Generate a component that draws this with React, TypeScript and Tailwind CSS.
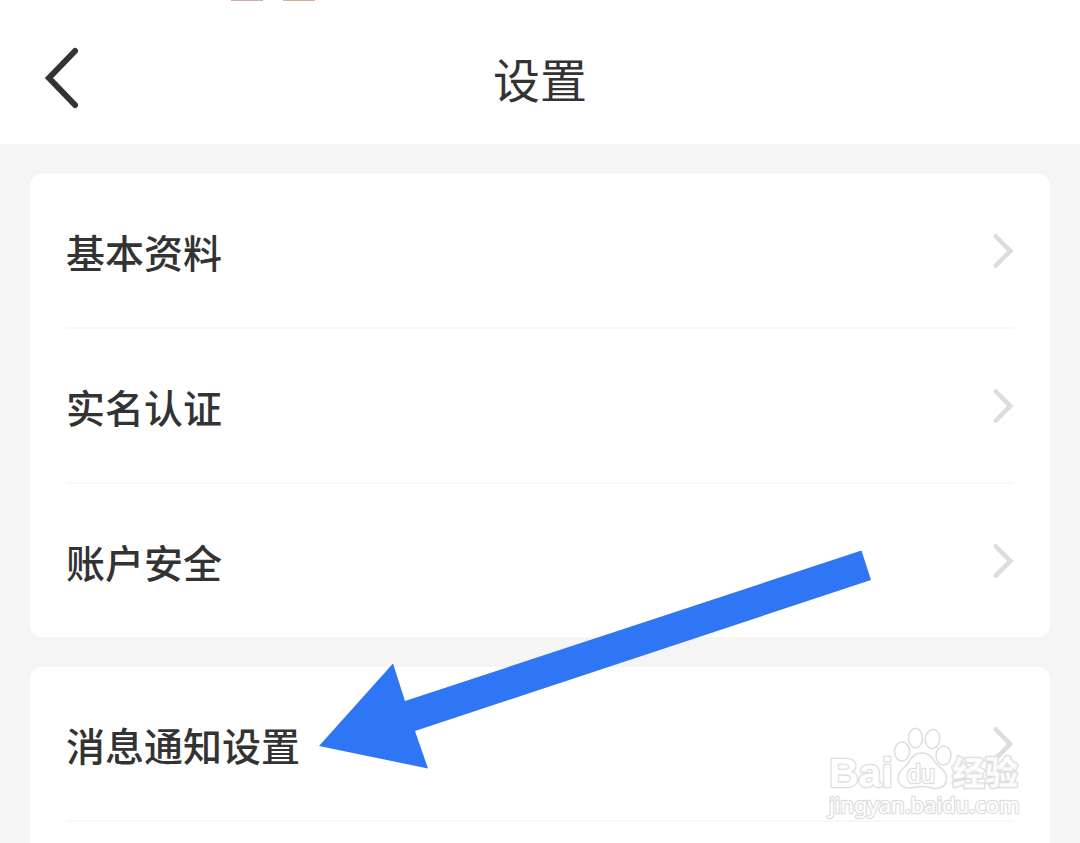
import React from "react";

const FONT = "font-['Noto_Sans_CJK_SC',sans-serif]";

function RowChevron() {
  return (
    <svg
      className="h-9 w-6 shrink-0"
      viewBox="0 0 24 36"
      fill="none"
      stroke="#dddddd"
      strokeWidth="4.6"
      strokeLinecap="round"
      strokeLinejoin="miter"
      aria-hidden="true"
    >
      <path d="M5.7 3.3 L20.3 18 L5.7 32.7" />
    </svg>
  );
}

function SettingsRow({ label, last = false }: { label: string; last?: boolean }) {
  return (
    <li className={last ? "" : "border-b-2 border-[#f7f7f7]"}>
      <a href="#" className="flex h-[153px] items-center justify-between">
        <span className="text-[39px] leading-[56px] font-medium text-[#333333]">{label}</span>
        <RowChevron />
      </a>
    </li>
  );
}

function PointerArrow() {
  return (
    <svg
      className="pointer-events-none absolute top-[550px] left-[319px] h-[220px] w-[553px]"
      viewBox="319 550 553 220"
      aria-hidden="true"
    >
      <polygon
        fill="#2f76f6"
        points="319,746 393,663.5 405,701 861.5,550.5 871,580 415,731 428,768.5"
      />
    </svg>
  );
}

function Watermark() {
  return (
    <svg
      className="pointer-events-none absolute top-[720px] left-[820px] h-[110px] w-[210px]"
      viewBox="820 720 210 110"
      fill="#ffffff"
      stroke="#dedede"
      strokeWidth="1.5"
      strokeLinejoin="round"
    >
      <ellipse cx="902" cy="751.5" rx="7.5" ry="9.5" />
      <ellipse cx="915.5" cy="738" rx="7" ry="9.7" />
      <ellipse cx="932.5" cy="739" rx="7.3" ry="9.5" transform="rotate(8 932.5 739)" />
      <ellipse cx="943.5" cy="755.5" rx="7.5" ry="9.5" />
      <path d="M922 753 C915 753 911 758 909 762 C906 767 898 770 898 778 C898 785 904 788.5 910 788 C915 787.5 918 786.5 922 786.5 C926 786.5 930 788.5 936 788.5 C943 788 947 784 946.5 777 C946 770 939 768 935 762 C932 757 929 753 922 753 Z" />
      <g strokeWidth="2.6" paintOrder="stroke">
        <text x="829" y="787" fontSize="41" className="font-['Liberation_Sans',sans-serif] font-bold">
          Bai
        </text>
        <text x="907" y="783" fontSize="25" className="font-['Liberation_Sans',sans-serif]">
          du
        </text>
        <text
          x="952"
          y="785"
          fontSize="33"
          fillOpacity="0.8"
          className="font-['Noto_Sans_CJK_SC',sans-serif] font-black"
        >
          经验
        </text>
        <text x="829" y="813" fontSize="22" className="font-['Noto_Sans',sans-serif]">
          jingyan.baidu.com
        </text>
      </g>
    </svg>
  );
}

export default function App() {
  return (
    <div className={`relative flex min-h-screen flex-col overflow-hidden bg-[#f5f5f5] ${FONT}`}>
      <header className="relative grid h-36 grid-cols-[1fr_auto_1fr] items-center bg-white px-9">
        <div className="absolute top-0 left-[231px] flex gap-5" aria-hidden="true">
          <span className="h-px w-8 bg-[#dba9b3]" />
          <span className="h-px w-8 bg-[#dcad98]" />
        </div>
        <button type="button" aria-label="返回" className="w-12 pt-3">
          <svg
            className="h-16 w-12"
            viewBox="0 0 48 64"
            fill="none"
            stroke="#333333"
            strokeWidth="6"
            strokeLinecap="round"
            strokeLinejoin="miter"
            aria-hidden="true"
          >
            <path d="M39 5 L13 32 L39 59" />
          </svg>
        </button>
        <h1 className="pt-3 text-[47px] leading-[68px] font-normal text-[#333333]">设置</h1>
      </header>

      <main className="flex grow flex-col gap-[30px] px-[30px] pt-[30px]">
        <ul className="rounded-xl bg-white px-9">
          <SettingsRow label="基本资料" />
          <SettingsRow label="实名认证" />
          <SettingsRow label="账户安全" last />
        </ul>
        <ul className="grow rounded-t-xl bg-white px-9">
          <SettingsRow label="消息通知设置" />
        </ul>
      </main>

      <PointerArrow />
      <Watermark />
    </div>
  );
}
